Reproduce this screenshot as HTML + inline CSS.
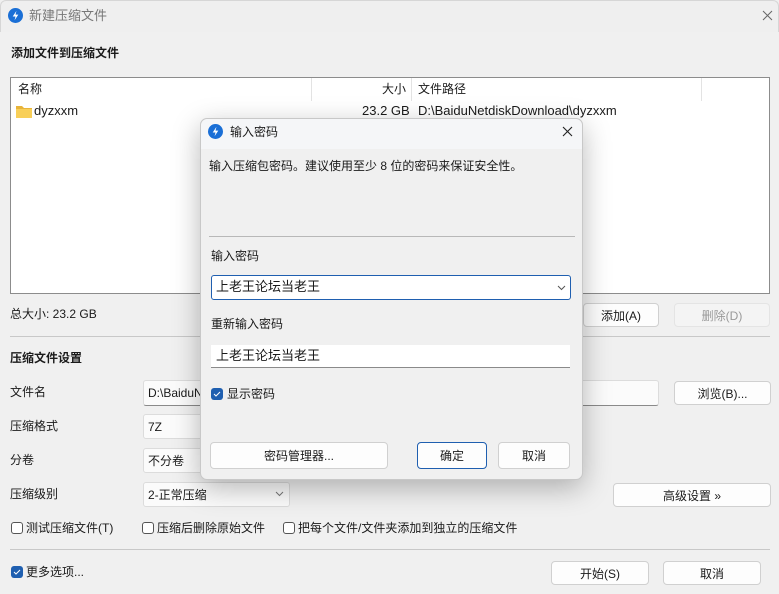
<!DOCTYPE html>
<html><head><meta charset="utf-8"><style>
*{box-sizing:border-box;margin:0;padding:0}
body{width:779px;height:594px;overflow:hidden;background:#f0f0f0;font-family:"Liberation Sans","Noto Sans CJK SC",sans-serif;font-size:12px;color:#1a1a1a;position:relative}
.a{position:absolute;white-space:nowrap}
.t{line-height:16px}
.btn{position:absolute;background:#fdfdfd;border:1px solid #d0d0d0;border-radius:4px;text-align:center;font-size:12px;display:flex;align-items:center;justify-content:center}
.inp{position:absolute;background:#fbfbfb;border:1px solid #dcdcdc;border-bottom:1px solid #8a8a8a;border-radius:3px;padding-left:4px;display:flex;align-items:center}
.cb{position:absolute;width:12px;height:12px;border:1px solid #555;border-radius:3px;background:#fff}
.cbc{position:absolute;width:12px;height:12px;border-radius:3px;background:#1f5fb0}
.hr{position:absolute;height:1px;background:#c8c8c8}
</style></head><body>
<div class="a" style="left:0;top:0;width:779px;height:32px;background:#efefef;border:1px solid #d6d6d6;border-bottom:none;border-radius:6px 6px 0 0"></div>
<svg class="a" style="left:8px;top:8px" width="15" height="15" viewBox="0 0 16 16"><circle cx="8" cy="8" r="8" fill="#1a6fd6"/><path d="M9 3L5 9h3l-1 4 4-6H8z" fill="#fff"/></svg>
<div class="a t" style="left:29px;top:8px;color:#777;font-size:13px">新建压缩文件</div>
<svg class="a" style="left:762px;top:10px" width="11" height="11"><path d="M1 1L10 10M10 1L1 10" stroke="#666" stroke-width="1"/></svg>
<div class="a t" style="left:11px;top:45px;font-weight:bold">添加文件到压缩文件</div>
<div class="a" style="left:10px;top:77px;width:760px;height:217px;background:#fff;border:1px solid #8c8c8c"></div>
<div class="a" style="left:311px;top:78px;width:1px;height:23px;background:#e3e3e3"></div>
<div class="a" style="left:411px;top:78px;width:1px;height:23px;background:#e3e3e3"></div>
<div class="a" style="left:701px;top:78px;width:1px;height:23px;background:#e3e3e3"></div>
<div class="a t" style="left:18px;top:81px">名称</div>
<div class="a t" style="left:382px;top:81px">大小</div>
<div class="a t" style="left:418px;top:81px">文件路径</div>
<svg class="a" style="left:16px;top:104px" width="16" height="14"><path d="M0 2h6l2 2h8v10H0z" fill="#e8b43a"/><path d="M0 5h16v9H0z" fill="#f8cf58"/></svg>
<div class="a t" style="left:34px;top:103px;font-size:13px">dyzxxm</div>
<div class="a t" style="left:362px;top:103px;font-size:13px">23.2 GB</div>
<div class="a t" style="left:418px;top:103px;font-size:13px">D:\BaiduNetdiskDownload\dyzxxm</div>
<div class="a t" style="left:10px;top:306px">总大小: 23.2 GB</div>
<div class="btn" style="left:583px;top:303px;width:76px;height:24px">添加(A)</div>
<div class="btn" style="left:674px;top:303px;width:96px;height:24px;color:#999;background:#f4f4f4;border-color:#e4e4e4">删除(D)</div>
<div class="hr" style="left:10px;top:336px;width:760px"></div>
<div class="a t" style="left:10px;top:350px;font-weight:bold">压缩文件设置</div>
<div class="a t" style="left:10px;top:384px">文件名</div>
<div class="inp" style="left:143px;top:380px;width:516px;height:26px">D:\BaiduNetdiskDownload\dyzxxm.7z</div>
<div class="btn" style="left:674px;top:381px;width:97px;height:24px">浏览(B)...</div>
<div class="a t" style="left:10px;top:418px">压缩格式</div>
<div class="inp" style="left:143px;top:414px;width:146px;height:25px;border-bottom-color:#dcdcdc">7Z</div>
<div class="a t" style="left:10px;top:452px">分卷</div>
<div class="inp" style="left:143px;top:448px;width:146px;height:25px;border-bottom-color:#dcdcdc">不分卷</div>
<div class="a t" style="left:10px;top:486px">压缩级别</div>
<div class="inp" style="left:143px;top:482px;width:147px;height:25px;border-bottom-color:#dcdcdc">2-正常压缩</div>
<svg class="a" style="left:275px;top:491px" width="9" height="6"><path d="M1 1l3.5 3.5L8 1" stroke="#777" fill="none"/></svg>
<div class="btn" style="left:613px;top:483px;width:158px;height:24px">高级设置 »</div>
<div class="cb" style="left:11px;top:522px"></div><div class="a t" style="left:26px;top:520px">测试压缩文件(T)</div>
<div class="cb" style="left:142px;top:522px"></div><div class="a t" style="left:157px;top:520px">压缩后删除原始文件</div>
<div class="cb" style="left:283px;top:522px"></div><div class="a t" style="left:298px;top:520px">把每个文件/文件夹添加到独立的压缩文件</div>
<div class="hr" style="left:10px;top:549px;width:760px"></div>
<div class="cbc" style="left:11px;top:566px"></div><svg class="a" style="left:11px;top:566px" width="12" height="12"><path d="M3 6l2 2 4-4" stroke="#fff" fill="none"/></svg>
<div class="a t" style="left:26px;top:564px">更多选项...</div>
<div class="btn" style="left:551px;top:561px;width:98px;height:24px">开始(S)</div>
<div class="btn" style="left:663px;top:561px;width:98px;height:24px">取消</div>

<div class="a" style="left:200px;top:118px;width:383px;height:362px;background:#f0f0f0;border:1px solid #c8c8c8;border-radius:7px;box-shadow:0 8px 28px rgba(0,0,0,.28)"></div>
<div class="a" style="left:201px;top:119px;width:381px;height:30px;background:#f5f6f8;border-radius:7px 7px 0 0"></div>
<svg class="a" style="left:208px;top:124px" width="15" height="15" viewBox="0 0 16 16"><circle cx="8" cy="8" r="8" fill="#1a6fd6"/><path d="M9 3L5 9h3l-1 4 4-6H8z" fill="#fff"/></svg>
<div class="a t" style="left:230px;top:124px">输入密码</div>
<svg class="a" style="left:562px;top:126px" width="11" height="11"><path d="M1 1L10 10M10 1L1 10" stroke="#222" stroke-width="1.1"/></svg>
<div class="a t" style="left:209px;top:158px">输入压缩包密码。建议使用至少 8 位的密码来保证安全性。</div>
<div class="hr" style="left:209px;top:236px;width:366px;background:#b8b8b8"></div>
<div class="a t" style="left:211px;top:248px">输入密码</div>
<div class="a" style="left:211px;top:275px;width:360px;height:25px;background:#fff;border:1px solid #1f5fb0;border-radius:3px"></div>
<div class="a t" style="left:216px;top:279px;font-size:13px">上老王论坛当老王</div>
<svg class="a" style="left:557px;top:285px" width="9" height="6"><path d="M1 1l3.5 3.5L8 1" stroke="#555" fill="none"/></svg>
<div class="a t" style="left:211px;top:316px">重新输入密码</div>
<div class="a" style="left:211px;top:345px;width:359px;height:23px;background:#fff;border-bottom:1px solid #8a8a8a"></div>
<div class="a t" style="left:216px;top:348px;font-size:13px">上老王论坛当老王</div>
<div class="cbc" style="left:211px;top:388px"></div><svg class="a" style="left:211px;top:388px" width="12" height="12"><path d="M3 6l2 2 4-4" stroke="#fff" fill="none"/></svg>
<div class="a t" style="left:227px;top:386px">显示密码</div>
<div class="btn" style="left:210px;top:442px;width:178px;height:27px">密码管理器...</div>
<div class="btn" style="left:417px;top:442px;width:70px;height:27px;border-color:#1f5fb0">确定</div>
<div class="btn" style="left:498px;top:442px;width:72px;height:27px">取消</div>
</body></html>
